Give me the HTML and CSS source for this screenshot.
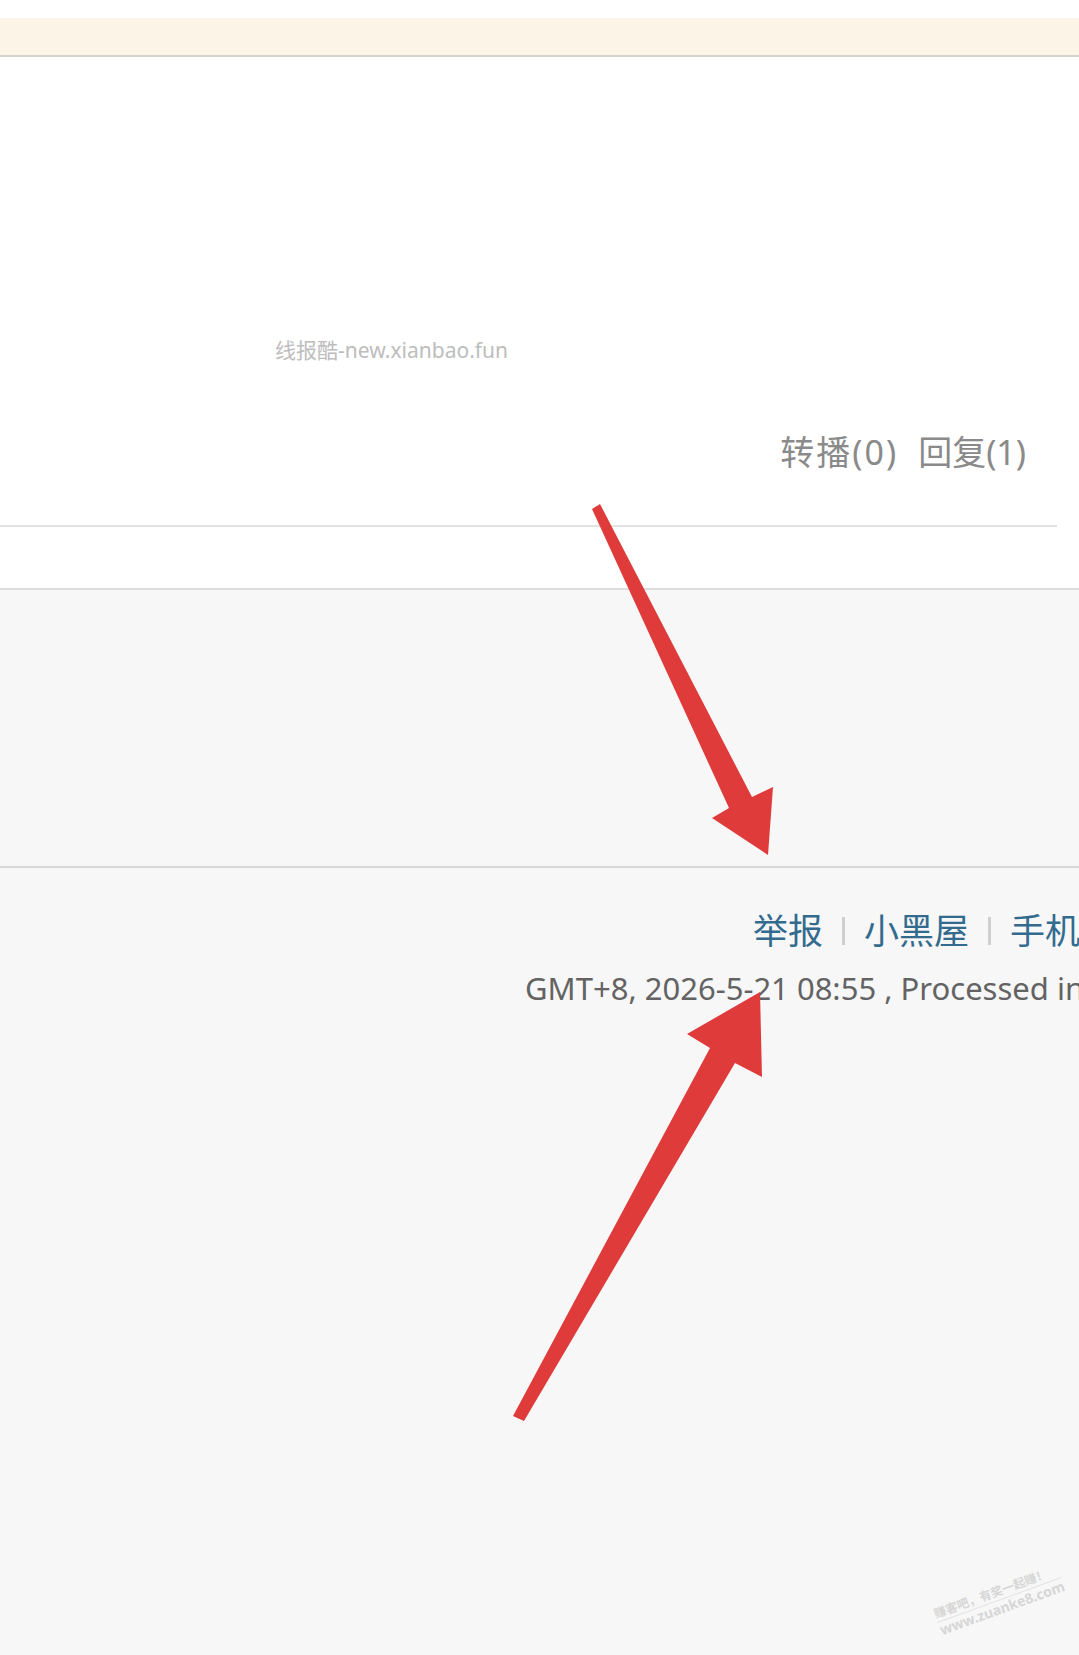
FILE: index.html
```html
<!DOCTYPE html>
<html lang="zh-CN">
<head>
  <meta charset="UTF-8">
  <meta name="viewport" content="width=device-width, initial-scale=1.0">
  <title>线报酷</title>
  <link rel="stylesheet" href="styles.css">
</head>
<body>
  <div class="page">
    <div class="top-space"></div>
    <div class="notice"></div>

    <div class="post">
      <p class="source-mark">线报酷-new.xianbao.fun</p>
      <p class="stats"><span class="forward">转播(0)</span><span>回复(1)</span></p>
      <div class="divider"></div>
    </div>

    <div class="footer">
      <div class="footer-top"></div>
      <p class="footer-links">
        <a href="#">举报</a><span class="sep"></span><a href="#">小黑屋</a><span class="sep"></span><a href="#">手机版</a>
      </p>
      <p class="footer-time">GMT+8, 2026-5-21 08:55 , Processed in 0.041 second(s)</p>
    </div>

    <!-- annotation arrows drawn over the screenshot -->
    <svg class="arrows" width="1079" height="1655" viewBox="0 0 1079 1655">
      <polygon points="600,504 752,797 773,787 768,855 712,818 729,808 592,509" fill="#e03b3b"/>
      <polygon points="760,992 762,1077 735,1063 524,1421 513,1416 710,1048 687,1034" fill="#e03b3b"/>
    </svg>

    <div class="corner-mark">
      <span>赚客吧，有奖一起赚！</span>
      <span class="url">www.zuanke8.com</span>
    </div>
  </div>
</body>
</html>
```

FILE: styles.css
```css
body {
  margin: 0;
  padding: 0;
  background-color: #f7f7f7;
}

.page {
  position: relative;
  width: 1079px;
  height: 1655px;
  overflow: hidden;
  background-color: #f7f7f7;
  font-family: "Noto Sans", "Noto Sans CJK SC", sans-serif;
}

p {
  margin: 0;
}

.top-space {
  height: 18px;
  background-color: #fff;
}

.notice {
  height: 37px;
  background-color: #fbf4e7;
  border-bottom: 2px solid #d5d3ce;
}

/* Post area */
.post {
  height: 531px;
  background-color: #fff;
  border-bottom: 2px solid #dcdcdc;
  display: flex;
  flex-direction: column;
}

.source-mark {
  margin-top: 281px;
  padding-left: 275px;
  font-size: 21px;
  line-height: 24px;
  color: #bdbdbd;
}

.stats {
  margin-top: 68px;
  padding-right: 53px;
  display: flex;
  justify-content: flex-end;
  gap: 20px;
  font-size: 34px;
  line-height: 44px;
  color: #8a8a8a;
}

.stats .forward {
  letter-spacing: 2px;
}

.divider {
  margin-top: 51px;
  margin-right: 22px;
  height: 2px;
  background-color: #e3e3e3;
}

/* Footer */
.footer-top {
  height: 276px;
  border-bottom: 2px solid #d8d8d8;
}

.footer-links {
  margin-top: 41px;
  padding-left: 753px;
  display: flex;
  align-items: center;
  white-space: nowrap;
  font-size: 35px;
  line-height: 44px;
}

.footer-links a {
  color: #336b8e;
  text-decoration: none;
}

.footer-links .sep {
  flex: none;
  width: 3px;
  height: 28px;
  margin: 0 19px;
  background-color: #cfcfcf;
}

.footer-time {
  margin-top: 15px;
  padding-left: 525px;
  white-space: nowrap;
  font-size: 31px;
  line-height: 40px;
  color: #636363;
}

/* Overlays */
.arrows {
  position: absolute;
  left: 0;
  top: 0;
}

.corner-mark {
  position: absolute;
  left: 932px;
  top: 1607px;
  display: flex;
  flex-direction: column;
  transform: rotate(-20deg);
  transform-origin: left top;
  font-size: 12px;
  line-height: 16px;
  font-weight: bold;
  color: #d6d6d6;
}

.corner-mark .url {
  font-size: 14px;
  border-top: 1px solid #e2e2e2;
}
```
